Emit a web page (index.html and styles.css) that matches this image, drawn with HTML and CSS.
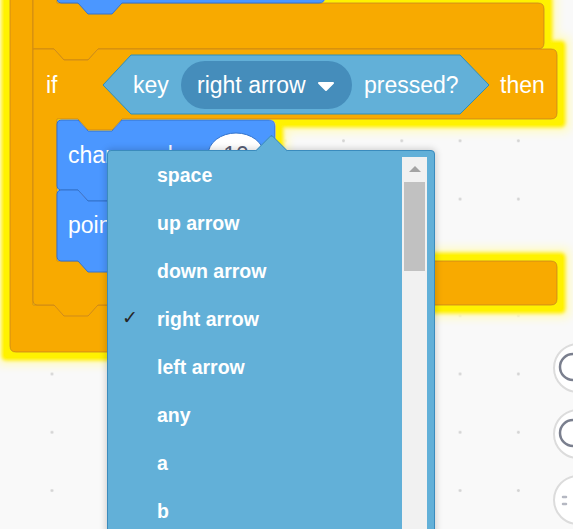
FILE: index.html
```html
<!DOCTYPE html>
<html lang="en">
<head>
  <meta charset="UTF-8">
  <meta name="viewport" content="width=device-width, initial-scale=1.0">
  <title>Scratch workspace - key dropdown</title>
  <link rel="stylesheet" href="styles.css">
</head>
<body>
  <div class="workspace">
    <svg class="blocks" width="573" height="529" viewBox="0 0 573 529">
      <defs>
        <filter id="glow" filterUnits="userSpaceOnUse" x="-60" y="-80" width="720" height="520">
          <feMorphology in="SourceAlpha" operator="dilate" radius="13" result="fat2"/>
          <feGaussianBlur in="fat2" stdDeviation="4" result="soft2"/>
          <feFlood flood-color="#fffbc4"/>
          <feComposite in2="soft2" operator="in" result="halo"/>
          <feMorphology in="SourceAlpha" operator="dilate" radius="9" result="fat"/>
          <feGaussianBlur in="fat" stdDeviation="1.5" result="soft"/>
          <feFlood flood-color="#fff200"/>
          <feComposite in2="soft" operator="in" result="ring"/>
          <feMerge>
            <feMergeNode in="halo"/>
            <feMergeNode in="ring"/>
            <feMergeNode in="SourceGraphic"/>
          </feMerge>
        </filter>
      </defs>

      <g filter="url(#glow)">
        <!-- forever (outer C) -->
        <path class="control" d="M10 -40 H33 V305 H284 Q290 305 290 311 V346 Q290 352 284 352 H16 Q10 352 10 346 Z"/>
        <!-- bottom arm of the block above -->
        <path class="control" d="M33 -40 H57 V3 H538 Q544 3 544 9 V43 Q544 49 538 49 H98 L88 60 H64 L54 49 H33 Z"/>
        <!-- if <> then -->
        <path class="control" d="M33 49 H54 L64 60 H88 L98 49 H551 Q557 49 557 55 V113 Q557 119 551 119 H122 L112 130 H88 L78 119 H57 V261 H551 Q557 261 557 267 V299 Q557 305 551 305 H98 L88 316 H64 L54 305 H37 Q33 305 33 301 Z"/>
        <!-- motion blocks -->
        <path class="motion" d="M57 -40 H325 V-3 Q325 3 319 3 H122 L112 14 H88 L78 3 H61 Q57 3 57 -1 Z"/>
        <path class="motion" d="M57 124 Q57 120 61 120 H78 L88 131 H112 L122 120 H269 Q275 120 275 126 V184 Q275 190 269 190 H122 L112 201 H88 L78 190 H61 Q57 190 57 186 Z"/>
        <path class="motion" d="M57 194 Q57 190 61 190 H78 L88 201 H112 L122 190 H400 Q406 190 406 196 V255 Q406 261 400 261 H122 L112 272 H88 L78 261 H61 Q57 261 57 257 Z"/>
      </g>

      <!-- key <> pressed? -->
      <path class="sensing" d="M103 85 L131 55 H460 L489 85 L460 114 H131 Z"/>
      <rect class="sensing-field" x="181" y="61" width="171" height="48" rx="24"/>
      <path class="field-arrow" d="M319 83 H333 L326 90 Z"/>

      <ellipse class="number-input" cx="236" cy="155" rx="28" ry="22"/>

      <text class="block-text" x="46" y="93">if</text>
      <text class="block-text" x="133" y="93">key</text>
      <text class="block-text" x="197" y="93">right arrow</text>
      <text class="block-text" x="364" y="93">pressed?</text>
      <text class="block-text" x="500" y="93">then</text>
      <text class="block-text" x="68" y="163">change x by</text>
      <text class="input-text" x="236" y="163">10</text>
      <text class="block-text" x="68" y="233">point in direction</text>
    </svg>

    <div class="dropdown">
      <div class="dropdown-arrow"></div>
      <ul class="menu-list">
        <li>space</li>
        <li>up arrow</li>
        <li>down arrow</li>
        <li class="checked">right arrow</li>
        <li>left arrow</li>
        <li>any</li>
        <li>a</li>
        <li>b</li>
      </ul>
      <div class="scrollbar">
        <div class="scroll-up"></div>
        <div class="scroll-thumb"></div>
      </div>
    </div>

    <div class="zoom-controls">
      <div class="zoom-button">
        <svg width="46" height="46" viewBox="0 0 46 46">
          <circle class="icon-line" cx="18" cy="22" r="13"/>
        </svg>
      </div>
      <div class="zoom-button">
        <svg width="46" height="46" viewBox="0 0 46 46">
          <circle class="icon-line" cx="18" cy="22" r="13"/>
        </svg>
      </div>
      <div class="zoom-button">
        <svg width="46" height="46" viewBox="0 0 46 46">
          <path class="icon-line faint" d="M8 20 H11 M8 27 H11"/>
        </svg>
      </div>
    </div>
  </div>
</body>
</html>
```

FILE: styles.css
```css
body {
  margin: 0;
  font-family: "Liberation Sans", Arial, sans-serif;
}
.workspace {
  position: relative;
  width: 573px;
  height: 529px;
  overflow: hidden;
  background-color: #f9f9f9;
  background-image: radial-gradient(circle, #d4d4d4 1.1px, transparent 1.7px);
  background-size: 58.3px 58.3px;
  background-position: 22.85px 53.35px;
}
.blocks {
  position: absolute;
  left: 0;
  top: 0;
}
.control {
  fill: #f8aa05;
  stroke: #cf8b17;
  stroke-width: 1;
}
.motion {
  fill: #4c97ff;
  stroke: #3373cc;
  stroke-width: 1;
}
.sensing {
  fill: #62b0d8;
  stroke: #2e8eb8;
  stroke-width: 1;
}
.sensing-field {
  fill: #458dbb;
}
.field-arrow {
  fill: #fff;
  stroke: #fff;
  stroke-width: 2;
  stroke-linejoin: round;
}
.number-input {
  fill: #fff;
  stroke: #3373cc;
  stroke-width: 1;
}
.block-text {
  font-family: "Liberation Sans", Arial, sans-serif;
  font-size: 23px;
  fill: #fff;
}
.input-text {
  font-family: "Liberation Sans", Arial, sans-serif;
  font-size: 23px;
  fill: #575e75;
  text-anchor: middle;
}

/* dropdown menu */
.dropdown {
  position: absolute;
  left: 107px;
  top: 150px;
  width: 328px;
  height: 400px;
  display: flex;
  align-items: flex-start;
  padding-right: 7px;
  box-sizing: border-box;
  background: #62b0d8;
  border: 1px solid #3a8bbd;
  border-radius: 4px;
  box-shadow: 0 0 7px 1px rgba(0, 0, 0, 0.18);
}
.dropdown-arrow {
  position: absolute;
  left: 152px;
  top: -12px;
  width: 22px;
  height: 22px;
  background: #62b0d8;
  border-top: 1px solid #3a8bbd;
  border-left: 1px solid #3a8bbd;
  border-top-left-radius: 3px;
  transform: rotate(45deg);
}
.menu-list {
  position: relative;
  flex: 1;
  list-style: none;
  margin: 0;
  padding: 0;
}
.menu-list li {
  position: relative;
  height: 48px;
  line-height: 48px;
  padding-left: 49px;
  font-size: 19.5px;
  font-weight: bold;
  color: #fff;
}
.menu-list li.checked::before {
  content: "\2713";
  position: absolute;
  left: 14px;
  top: -2px;
  font-family: "DejaVu Sans", sans-serif;
  font-size: 19px;
  font-weight: normal;
  color: #262626;
}
.scrollbar {
  width: 25px;
  height: 400px;
  margin-top: 6px;
  background: #f1f1f1;
}
.scroll-up {
  width: 0;
  height: 0;
  margin: 9px auto 10px;
  border-left: 6px solid transparent;
  border-right: 6px solid transparent;
  border-bottom: 6px solid #a3a3a3;
}
.scroll-thumb {
  height: 89px;
  margin: 0 2px;
  background: #c1c1c1;
}

/* zoom buttons at the right edge */
.zoom-controls {
  position: absolute;
  left: 553px;
  top: 343px;
  display: flex;
  flex-direction: column;
  gap: 16px;
}
.zoom-button {
  width: 50px;
  height: 50px;
  box-sizing: border-box;
  border: 2px solid #dcdcdc;
  border-radius: 50%;
  background: #fff;
}
.icon-line {
  fill: none;
  stroke: #7a7f8e;
  stroke-width: 2.5;
  stroke-linecap: round;
}
.icon-line.faint {
  stroke: #b5b8c2;
}
```
